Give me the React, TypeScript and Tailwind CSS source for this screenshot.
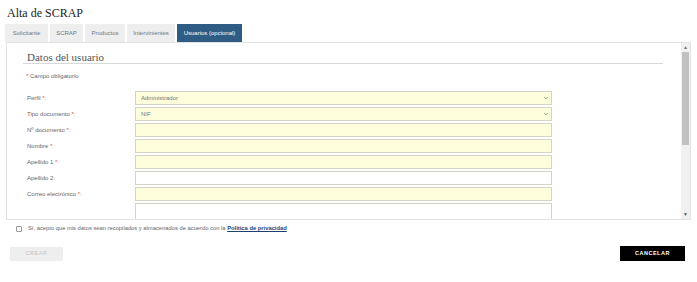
import { ChevronDown } from 'lucide-react';

const tabs = [
  { name: 'Solicitante', w: 'w-[43px]' },
  { name: 'SCRAP', w: 'w-[33px]' },
  { name: 'Productos', w: 'w-[40px]' },
  { name: 'Intervinientes', w: 'w-[48px]' },
  { name: 'Usuarios (opcional)', w: 'w-[65px]' },
];

interface Field {
  label: string;
  required?: boolean;
  value?: string;
  select?: boolean;
  yellow?: boolean;
}

const fields: Field[] = [
  { label: 'Perfil', required: true, value: 'Administrador', select: true, yellow: true },
  { label: 'Tipo documento', required: true, value: 'NIF', select: true, yellow: true },
  { label: 'Nº documento', required: true, yellow: true },
  { label: 'Nombre', required: true, yellow: true },
  { label: 'Apellido 1', required: true, yellow: true },
  { label: 'Apellido 2:' },
  { label: 'Correo electrónico', required: true, yellow: true },
];

function FieldRow({ field }: { field: Field }) {
  return (
    <div className="flex items-center h-[16px]">
      <div className="w-[108px] text-[6px] text-[#666]">
        {field.label}
        {field.required && <span className="text-[#d9534f]"> *:</span>}
      </div>
      <div
        className={`w-[417px] h-[14px] border border-[#d6d2c8] flex items-center justify-between pl-[5px] pr-[2px] text-[6px] text-[#777] ${
          field.yellow ? 'bg-[#fefddc]' : 'bg-white'
        }`}
      >
        <span>{field.value}</span>
        {field.select && <ChevronDown size={6} strokeWidth={2.5} className="text-[#555]" />}
      </div>
    </div>
  );
}

export default function App() {
  return (
    <div className="w-[697px] h-[282px] bg-white overflow-hidden font-['Liberation_Sans',Arial,sans-serif]">
      <h1 className="pl-[7px] pt-[6px] h-[24px] text-[12px] leading-[14px] text-[#222] font-['Liberation_Serif',serif]">
        Alta de SCRAP
      </h1>

      {/* Tabs */}
      <div className="flex gap-[2px] pl-[5px] h-[18px]">
        {tabs.map((tab, i) => {
          const active = i === tabs.length - 1;
          return (
            <div
              key={tab.name}
              className={`${tab.w} flex items-center justify-center whitespace-nowrap text-[6px] ${
                active ? 'bg-[#2f5c84] text-white' : 'bg-[#eeeeee] text-[#6a7888]'
              }`}
            >
              {tab.name}
            </div>
          );
        })}
      </div>

      {/* Panel */}
      <div className="ml-[6px] w-[685px] h-[178px] border border-[#e3e3e3] flex">
        <div className="flex-1 overflow-hidden">
          <div className="mt-[8px] ml-[16px] mr-[18px] pl-[4px] border-b border-[#d8d8d8] h-[13px] text-[11px] leading-[12px] text-[#555] font-['Liberation_Serif',serif]">
            Datos del usuario
          </div>
          <div className="ml-[19px] mt-[8px] text-[6px] text-[#666]">
            <span className="text-[#d9534f]">*</span> Campo obligatorio
          </div>
          <div className="ml-[20px] mt-[9px] flex flex-col">
            {fields.map((f) => (
              <FieldRow key={f.label} field={f} />
            ))}
            <div className="flex mt-[1px]">
              <div className="w-[108px]" />
              <div className="w-[417px] h-[30px] border border-[#d6d2c8] bg-white" />
            </div>
          </div>
        </div>
        {/* Scrollbar */}
        <div className="w-[9px] bg-[#f1f1f1] flex flex-col items-center">
          <div className="h-[9px] w-full flex items-center justify-center text-[5px] text-[#777]">▲</div>
          <div className="w-[7px] h-[93px] bg-[#c1c1c1]" />
          <div className="flex-1" />
          <div className="h-[9px] w-full flex items-center justify-center text-[5px] text-[#555]">▼</div>
        </div>
      </div>

      {/* Consent */}
      <div className="flex items-center mt-[3px] pl-[16px] h-[11px]">
        <div className="w-[6px] h-[6px] border border-[#999] rounded-[1px] bg-white" />
        <span className="ml-[6px] text-[5.8px] text-[#666]">
          Sí, acepto que mis datos sean recopilados y almacenados de acuerdo con la{' '}
          <span className="font-bold text-[#1f3f6f] underline">Política de privacidad</span>
        </span>
      </div>

      {/* Buttons */}
      <div className="flex justify-between items-center mt-[12px] pl-[10px] pr-[12px]">
        <div className="w-[53px] h-[14px] bg-[#eeeeee] text-[#c4c4c4] text-[5.5px] tracking-[0.5px] flex items-center justify-center">
          CREAR
        </div>
        <div className="w-[65px] h-[15px] bg-black text-white font-bold text-[5.5px] tracking-[0.5px] flex items-center justify-center">
          CANCELAR
        </div>
      </div>
    </div>
  );
}
